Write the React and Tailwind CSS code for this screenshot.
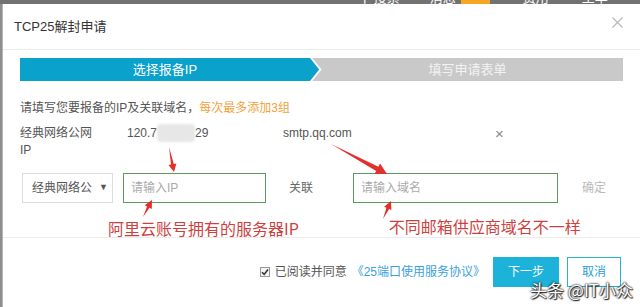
import React from 'react';

const arrowPoints = (x1, y1, x2, y2, headLen, headW, tailW) => {
  const dx = x2 - x1;
  const dy = y2 - y1;
  const len = Math.hypot(dx, dy);
  const ux = dx / len;
  const uy = dy / len;
  const px = -uy;
  const py = ux;
  const bx = x2 - ux * headLen;
  const by = y2 - uy * headLen;
  const sw = tailW * 0.9;
  const pts = [
    [x1, y1],
    [bx + px * sw, by + py * sw],
    [bx + px * headW, by + py * headW],
    [x2, y2],
    [bx - px * headW, by - py * headW],
    [bx - px * sw, by - py * sw],
  ];
  return pts.map((p) => p.map((v) => v.toFixed(1)).join(',')).join(' ');
};

const Arrows = () => (
  <svg className="absolute inset-0 pointer-events-none" width="640" height="307" viewBox="0 0 640 307">
    <g fill="#e3302e">
      <polygon points={arrowPoints(169, 147, 174, 172, 8, 4, 1.6)} />
      <polygon points={arrowPoints(143, 217, 152, 200, 8, 4, 1.6)} />
      <polygon points={arrowPoints(331, 144, 387, 174, 11, 6, 2.6)} />
      <polygon points={arrowPoints(383, 219, 391, 201, 8, 4, 1.6)} />
    </g>
  </svg>
);

const StepBar = () => (
  <div className="flex h-[23px] text-[13px] leading-[23px]">
    <div className="w-[290px] bg-[#0aa1cb] text-center text-white">选择报备IP</div>
    <svg width="12" height="23" viewBox="0 0 12 23" className="shrink-0">
      <rect x="0" y="0" width="12" height="23" fill="#c9c9c9" />
      <polygon points="0,0 9,11.5 0,23" fill="#0aa1cb" />
      <polyline points="0.5,-1 10.5,11.5 0.5,24" fill="none" stroke="#ffffff" strokeWidth="1.6" />
    </svg>
    <div className="flex-1 bg-[#c9c9c9] text-center text-[#f3f3f3] pr-[10px]">填写申请表单</div>
  </div>
);

export default function App() {
  return (
    <div
      className="relative w-[640px] h-[307px] overflow-hidden bg-white flex flex-col"
      style={{ fontFamily: '"Liberation Sans", "Noto Sans CJK SC", sans-serif' }}
    >
      {/* top strip of the page behind */}
      <div className="h-[4px] bg-[#727272] flex overflow-hidden shrink-0">
        <div className="flex items-start -mt-[9px] text-[13px] leading-none text-white">
          <span className="ml-[360px]">⚲ 搜索</span>
          <span className="ml-[30px]">消息</span>
          <span className="ml-[5px] w-[29px] h-[14px] bg-[#f5a623]" />
          <span className="ml-[33px]">费用</span>
          <span className="ml-[33px]">工单</span>
        </div>
      </div>

      <div className="flex flex-1">
        <div className="w-[3px] bg-[#8e8e8e] border-r border-[#b5b5b5]" />

        <div className="flex-1 flex flex-col">
          {/* header */}
          <div className="h-[46px] flex items-center justify-between pl-[11px] pr-[17px] border-b border-[#ececec]">
            <span className="text-[13px] text-[#333]">TCP25解封申请</span>
            <svg width="11" height="11" viewBox="0 0 11 11" className="-mt-[8px]">
              <path d="M0.5 0.5 L10.5 10.5 M10.5 0.5 L0.5 10.5" stroke="#b9b9b9" strokeWidth="1.2" />
            </svg>
          </div>

          {/* body */}
          <div className="px-[17px] pt-[8px] text-[12px] text-[#555]">
            <StepBar />

            <div className="mt-[18px] leading-[18px]">
              请填写您要报备的IP及关联域名，<span className="text-[#f2a23a]">每次最多添加3组</span>
            </div>

            <div className="mt-[8px] flex leading-[17px]">
              <div className="w-[107px]">
                经典网络公网
                <br />
                IP
              </div>
              <div className="w-[156px] flex items-start">
                <span>120.7</span>
                <span className="w-[38px] h-[18px] -mt-[1px] bg-[#e7e7e7] rounded-[4px] blur-[1px]" />
                <span>29</span>
              </div>
              <div className="w-[212px]">smtp.qq.com</div>
              <div className="text-[15px] leading-[17px] text-[#888]">×</div>
            </div>

            <div className="mt-[14px] flex items-center h-[30px]">
              <div className="ml-[2px] w-[91px] h-[30px] border border-[#dcdcdc] flex items-center pl-[9px] text-[#555]">
                <span>经典网络公</span>
                <span className="ml-[7px] text-[9px]">▼</span>
              </div>
              <div className="ml-[10px] w-[143px] h-[30px] border border-[#5b9b5b] flex items-center pl-[7px] text-[#aaa]">
                请输入IP
              </div>
              <span className="ml-[23px] text-[#666]">关联</span>
              <div className="ml-[40px] w-[205px] h-[30px] border border-[#5b9b5b] flex items-center pl-[7px] text-[#aaa]">
                请输入域名
              </div>
              <span className="ml-[24px] text-[#bbb]">确定</span>
            </div>

            <div className="h-[34px] flex items-start text-[16px] leading-[20px] text-[#cf3f3f]" style={{ fontFamily: '"Noto Sans CJK SC", sans-serif' }}>
              <span className="ml-[88px] mt-[15px]">阿里云账号拥有的服务器IP</span>
              <span className="ml-[90px] mt-[13px]">不同邮箱供应商域名不一样</span>
            </div>
          </div>

          {/* footer */}
          <div className="flex-1 border-t border-[#ececec] flex justify-end items-start pt-[19px] pr-[19px] text-[12px]">
            <div className="h-[30px] flex items-center">
              <span className="w-[10px] h-[10px] border border-[#999] bg-[#f4f4f4] flex items-center justify-center">
                <svg width="8" height="8" viewBox="0 0 8 8">
                  <path d="M1 4.2 L3.2 6.4 L7 1.5" fill="none" stroke="#333" strokeWidth="1.6" />
                </svg>
              </span>
              <span className="ml-[5px] text-[#555]">已阅读并同意</span>
              <span className="ml-[5px] text-[#3aa2dc]">《25端口使用服务协议》</span>
            </div>
            <div className="ml-[8px] w-[66px] h-[30px] bg-[#1cb2d9] text-white flex items-center justify-center">下一步</div>
            <div className="ml-[8px] w-[54px] h-[30px] border border-[#2bb0d6] text-[#2a9fd6] flex items-center justify-center">取消</div>
          </div>
        </div>
      </div>

      <Arrows />

      <div
        className="absolute left-[530px] top-[279px] text-[17px] leading-[22px] text-white"
        style={{ fontFamily: '"Noto Sans CJK SC", sans-serif', textShadow: '0 0 2px #222, 0 0 2px #222, 1px 1px 1px #222' }}
      >
        头条 @IT小众
      </div>
    </div>
  );
}
